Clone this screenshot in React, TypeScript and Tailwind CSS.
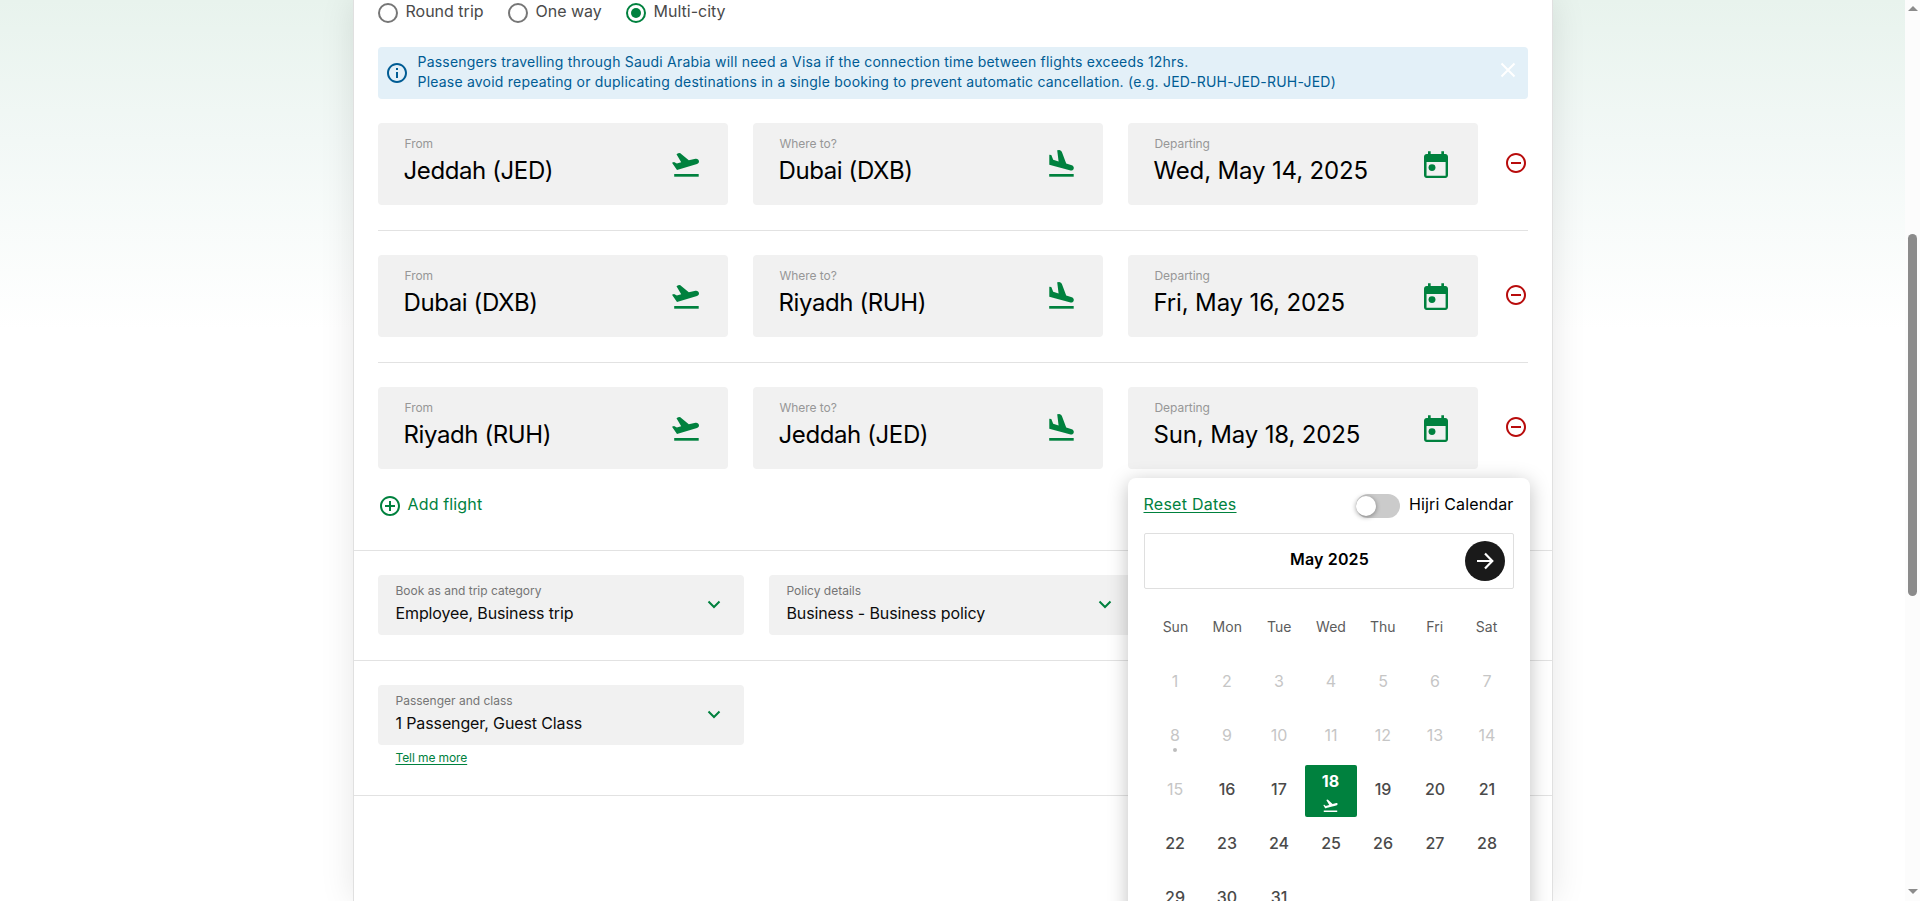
import React from "react";
import { MdFlightTakeoff, MdRemoveCircleOutline, MdAddCircleOutline, MdInfoOutline } from "react-icons/md";

const flights = [
  { from: "Jeddah (JED)", to: "Dubai (DXB)", date: "Wed, May 14, 2025" },
  { from: "Dubai (DXB)", to: "Riyadh (RUH)", date: "Fri, May 16, 2025" },
  { from: "Riyadh (RUH)", to: "Jeddah (JED)", date: "Sun, May 18, 2025" },
];

const weekdays = ["Sun", "Mon", "Tue", "Wed", "Thu", "Fri", "Sat"];
const days = Array.from({ length: 31 }, (_, i) => i + 1);

function TakeoffIcon() {
  return (
    <svg viewBox="0 0 32 32" className="size-8" fill="currentColor">
      <path d="M2 13.800 4 12.900 6.900 14.500 11.200 13.200 6.500 5.200Q8 4 10 4L18.800 11.200 25.500 9.800C27.300 9.500 28.900 10.700 29 12.400 29 13.600 28.300 14.500 27 14.900L7 21Z" />
      <path d="M4.200 25h24.500v2.700H4.200z" />
    </svg>
  );
}

function LandingIcon() {
  return (
    <svg viewBox="0 0 32 32" className="size-8" fill="currentColor">
      <path d="M12.200 1.300 14.300 1Q16.400 1.600 16.900 3L21.200 14.400 26.800 16.300C28.400 16.900 29.100 18.300 28.700 19.700 28.300 21 27 21.700 25.600 21.400L4.300 15.700V5.800L6.300 6.100 8.200 10.800 13.600 12.400Z" />
      <path d="M4.200 25h24.500v2.700H4.200z" />
    </svg>
  );
}

function CalendarIcon() {
  return (
    <svg viewBox="0 0 24 24" className="mt-px size-8 shrink-0" fill="currentColor">
      <path
        fillRule="evenodd"
        d="M19 3h-1V1h-2v2H8V1H6v2H5C3.900 3 3 3.900 3 5v14c0 1.100.9 2 2 2h14c1.100 0 2-.9 2-2V5c0-1.100-.9-2-2-2zm.2 16.300H4.900V9H19.200z"
      />
      <circle cx="9" cy="13.200" r="2.600" />
    </svg>
  );
}

function Radio({ label, checked }: { label: string; checked?: boolean }) {
  return (
    <label className="flex h-5 items-center gap-2">
      <span
        className={
          checked
            ? "flex size-5 items-center justify-center rounded-full border-2 border-[#00813e]"
            : "flex size-5 items-center justify-center rounded-full border-2 border-[#767676]"
        }
      >
        {checked && <span className="size-[10px] rounded-full bg-[#00813e]" />}
      </span>
      <span className="-mt-1 text-base leading-5 text-[#4a4a4a]">{label}</span>
    </label>
  );
}

function Field({ label, value, icon }: { label: string; value: string; icon: React.ReactNode }) {
  return (
    <div className="flex h-[82px] w-[350px] justify-between rounded bg-[#f1f1f1] pr-[26px] pl-[26px]">
      <div className="pt-[13px]">
        <div className="pl-px text-xs leading-4 tracking-[-0.05px] text-[#979797]">{label}</div>
        {value.includes("(") ? (
          <div className="text-2xl leading-[38px] tracking-[-0.4px] whitespace-nowrap text-black">{value}</div>
        ) : (
          <div className="text-2xl leading-[38px] tracking-[-0.15px] whitespace-nowrap text-black">{value}</div>
        )}
      </div>
      <div className="pt-[26px] text-[#00813e]">{icon}</div>
    </div>
  );
}

function SelectBox({ label, value }: { label: string; value: string }) {
  return (
    <div className="flex h-[60px] w-[366px] items-start justify-between rounded bg-[#f1f1f1] pr-[23px] pl-[18px]">
      <div className="pt-2">
        <div className="text-xs leading-4 text-[#757575]">{label}</div>
        <div className="text-base leading-[28px] tracking-[-0.12px] whitespace-nowrap text-[#0c0c0c]">{value}</div>
      </div>
      <svg viewBox="0 0 14 10" className="mt-[25px] h-[10px] w-[14px]" fill="none" stroke="#00813e" strokeWidth="2">
        <path d="M1.500 1.500 7 7l5.500-5.500" />
      </svg>
    </div>
  );
}

function Day({ day }: { day: number }) {
  if (day === 18) {
    return (
      <div className="flex size-[52px] flex-col items-center rounded-xs bg-[#00813e] pt-[6px] text-white">
        <span className="text-base leading-5 font-bold">18</span>
        <MdFlightTakeoff className="mt-[6px] size-[17px]" />
      </div>
    );
  }
  return (
    <div
      className={
        day < 16
          ? "relative flex size-[52px] items-center justify-center pl-px text-base text-[#c6c6c6]"
          : "relative flex size-[52px] items-center justify-center pl-px text-base font-medium text-[#4a4a4a]"
      }
    >
      <span className="-mt-[5px]">{day}</span>
      {day === 8 && <span className="absolute bottom-[11px] size-1 rounded-full bg-[#bdbdbd]" />}
    </div>
  );
}

function DatePopup() {
  return (
    <div className="absolute top-[91px] left-0 z-10 h-[520px] w-[402px] rounded-lg bg-white px-4 pt-4 shadow-[0_4px_20px_rgba(0,0,0,0.25)]">
      <div className="flex h-6 items-center justify-between">
        <a className="-mt-[4px] text-base leading-5 tracking-[0.25px] text-[#00813e] underline underline-offset-2">
          Reset Dates
        </a>
        <div className="flex items-center gap-[9px]">
          <div className="h-6 w-11 rounded-full bg-[#cbcbcb] py-[2px]">
            <div className="size-5 rounded-full bg-white shadow-[0_1px_5px_rgba(0,0,0,0.4)]" />
          </div>
          <span className="-mt-[4px] text-base leading-5 tracking-[0.15px] text-black">Hijri Calendar</span>
        </div>
      </div>
      <div className="mt-[15px] flex h-14 items-center rounded-xs border border-[#dfdfdf] pr-2 pl-[50px]">
        <div className="-mt-1 flex-1 text-center text-base font-semibold tracking-[0.15px] text-black">May 2025</div>
        <button className="flex size-10 items-center justify-center rounded-full bg-[#1a1a1a]">
          <svg viewBox="0 0 18 18" className="size-[18px]" fill="none" stroke="white" strokeWidth="2.2">
            <path d="M1 9h15M9 1.500 16.300 9 9 16.500" />
          </svg>
        </button>
      </div>
      <div className="mt-[26px] ml-[5px] grid w-[364px] grid-cols-7 pl-px text-center text-sm leading-6 text-[#5c5c5c]">
        {weekdays.map((d) => (
          <div key={d}>{d}</div>
        ))}
      </div>
      <div className="mt-[18px] ml-[5px] grid w-[364px] grid-cols-7 gap-y-[2px]">
        {days.map((d) => (
          <Day key={d} day={d} />
        ))}
      </div>
    </div>
  );
}

function ScrollBar() {
  return (
    <div className="flex h-full w-[15px] shrink-0 flex-col items-center bg-[#fcfcfc]">
      <svg viewBox="0 0 10 5" className="mt-[6px] h-[5px] w-[10px]" fill="#8b8b8b">
        <path d="M5 0 10 5H0z" />
      </svg>
      <div className="mt-[223px] h-[362px] w-[9px] rounded-full bg-[#8b8b8b]" />
      <svg viewBox="0 0 10 5" className="mt-auto mb-[7px] h-[5px] w-[10px]" fill="#8b8b8b">
        <path d="M0 0h10L5 5z" />
      </svg>
    </div>
  );
}

export default function App() {
  return (
    <div className="flex h-[901px] w-[1920px] overflow-hidden bg-white font-['Inter','Liberation_Sans',sans-serif]">
      <div className="flex flex-1 justify-center bg-linear-to-b from-[#e8f3ed] via-[#f2f8f6] via-[140px] to-white to-[330px]">
        <main className="h-[901px] w-[1200px] border-x border-[#e0e0e0] bg-white shadow-[0_0_32px_rgba(0,0,0,0.1)]">
          <div className="px-6 pt-[3px]">
            <div className="flex">
              <div className="w-[130px]">
                <Radio label="Round trip" />
              </div>
              <div className="w-[118px]">
                <Radio label="One way" />
              </div>
              <Radio label="Multi-city" checked />
            </div>

            <div className="mt-6 flex h-[52px] items-center rounded bg-[#e3f0f8] pr-[12px] pl-[7px] text-[#005c94]">
              <MdInfoOutline className="size-6 shrink-0" />
              <p className="-mt-[3px] ml-[9px] flex-1 text-sm leading-5 tracking-[0.21px]">
                Passengers travelling through Saudi Arabia will need a Visa if the connection time between flights exceeds
                12hrs.
                <br />
                Please avoid repeating or duplicating destinations in a single booking to prevent automatic
                cancellation. (e.g. JED-RUH-JED-RUH-JED)
              </p>
              <svg viewBox="0 0 16 16" className="-mt-[6px] size-4" stroke="white" strokeWidth="2">
                <path d="M1.500 1.500l13 13M14.500 1.500l-13 13" />
              </svg>
            </div>

            <div className="mt-6 flex flex-col">
              {flights.map((f, i) => (
                <div
                  key={f.from}
                  className={i < 2 ? "mb-6 flex border-b border-[#e2e2e2] pb-[25px]" : "flex"}
                >
                  <div className="flex gap-[25px]">
                    <Field label="From" value={f.from} icon={<TakeoffIcon />} />
                    <Field label="Where to?" value={f.to} icon={<LandingIcon />} />
                    <div className="relative">
                      <Field label="Departing" value={f.date} icon={<CalendarIcon />} />
                      {i === 2 && <DatePopup />}
                    </div>
                  </div>
                  <MdRemoveCircleOutline className="mt-7 ml-auto size-6 text-[#b80c0c]" />
                </div>
              ))}
            </div>

            <button className="mt-[25px] flex h-6 items-center gap-[6px] text-[#00813e]">
              <MdAddCircleOutline className="size-6" />
              <span className="-mt-1 text-base leading-5 tracking-[0.15px]">Add flight</span>
            </button>
          </div>

          <section className="mt-8 flex h-[110px] gap-[25px] border-t border-[#e2e2e2] px-6 pt-6">
            <SelectBox label="Book as and trip category" value="Employee, Business trip" />
            <SelectBox label="Policy details" value="Business - Business policy" />
          </section>
          <section className="h-[136px] border-y border-[#e2e2e2] px-6 pt-6">
            <SelectBox label="Passenger and class" value="1 Passenger, Guest Class" />
            <a className="mt-[5px] ml-[18px] block text-xs leading-4 tracking-[-0.1px] text-[#00813e] underline underline-offset-2">
              Tell me more
            </a>
          </section>
        </main>
      </div>
      <ScrollBar />
    </div>
  );
}
